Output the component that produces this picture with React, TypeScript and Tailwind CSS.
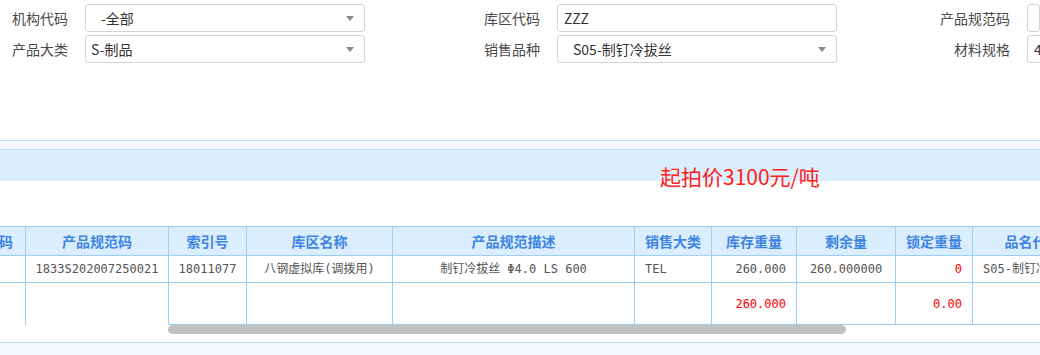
const cjk = "font-['Noto_Sans_CJK_SC',sans-serif]";
const mono = "font-['DejaVu_Sans_Mono','Noto_Sans_CJK_SC',monospace]";

type Field = { label: string; value: string; select?: boolean; pad: string };

const row1: Field[] = [
  { label: "机构代码", value: "-全部", select: true, pad: "pl-[15px]" },
  { label: "库区代码", value: "ZZZ", pad: "pl-[6px]" },
  { label: "产品规范码", value: "", pad: "pl-[6px]" },
];
const row2: Field[] = [
  { label: "产品大类", value: "S-制品", select: true, pad: "pl-[5px]" },
  { label: "销售品种", value: "S05-制钉冷拔丝", select: true, pad: "pl-[15px]" },
  { label: "材料规格", value: "4.0", pad: "pl-[6px]" },
];

const FormRow = ({ fields }: { fields: Field[] }) => (
  <div className="grid h-[28px] grid-cols-[85px_280px_192px_280px_190px_1fr] items-stretch">
    {fields.map((f, i) => (
      <div key={i} className="contents">
        <div className={`flex items-center justify-end pr-[17px] text-[14px] text-[#4a4a4a] whitespace-nowrap ${cjk}`}>
          {f.label}
        </div>
        <div className={`flex items-center rounded-[3px] border border-[#d4d4d4] bg-white ${f.pad} text-[14px] text-[#333] ${cjk}`}>
          <span className="flex-1 whitespace-nowrap overflow-hidden">{f.value}</span>
          {f.select && (
            <span className="mr-[10px] h-0 w-0 border-x-[4px] border-t-[5px] border-x-transparent border-t-[#8a8a8a]" />
          )}
        </div>
      </div>
    ))}
  </div>
);

const cols = [
  { w: "w-[81px]", title: "物料编码", align: "justify-center" },
  { w: "w-[143px]", title: "产品规范码", align: "justify-center" },
  { w: "w-[78px]", title: "索引号", align: "justify-center" },
  { w: "w-[146px]", title: "库区名称", align: "justify-center" },
  { w: "w-[242px]", title: "产品规范描述", align: "justify-center" },
  { w: "w-[77px]", title: "销售大类", align: "justify-start pl-[10px]" },
  { w: "w-[85px]", title: "库存重量", align: "justify-end pr-[10px]" },
  { w: "w-[99px]", title: "剩余量", align: "justify-center" },
  { w: "w-[77px]", title: "锁定重量", align: "justify-end pr-[10px]" },
  { w: "w-[120px]", title: "品名代码", align: "justify-start pl-[10px]" },
];

const data1 = ["", "1833S202007250021", "18011077", "八钢虚拟库(调拨用)", "制钉冷拔丝 Φ4.0 LS 600", "TEL", "260.000", "260.000000", "0", "S05-制钉冷拔丝"];
const red1 = [8];
const data2 = ["", "", "", "", "", "", "260.000", "", "0.00", ""];

export default function App() {
  return (
    <div className="h-[355px] w-[1040px] overflow-hidden bg-white">
      {/* query form */}
      <div className="flex flex-col gap-[3px] pt-[4px]">
        <FormRow fields={row1} />
        <FormRow fields={row2} />
      </div>

      {/* price banner */}
      <div className="mt-[77px] border-t border-[#bddcf5]">
        <div className="h-[9px] border-b border-[#bddcf5] bg-[#f5f9fe]" />
        <div className="h-[31px] bg-[#dbeefd]">
          <div className={`pl-[660px] pt-[15px] text-[21px] leading-[22px] text-[#ff2020] ${cjk}`}>起拍价3100元/吨</div>
        </div>
      </div>

      {/* grid */}
      <div className="mt-[45px] w-full overflow-hidden">
        <div className="ml-[-55px] flex w-max flex-col">
          <div className="flex h-[30px] border-y border-[#9dcff5] bg-[#dbeefd]">
            {cols.map((c, i) => (
              <div
                key={i}
                className={`${c.w} flex shrink-0 items-center justify-center border-r border-[#9dcff5] text-[14px] font-bold text-[#3d84e4] whitespace-nowrap ${cjk}`}
              >
                {c.title}
              </div>
            ))}
          </div>
          <div className="flex h-[27px]">
            {cols.map((c, i) => (
              <div
                key={i}
                className={`${c.w} flex shrink-0 items-center ${c.align} border-r border-b border-[#9dcff5] text-[12px] whitespace-nowrap ${mono} ${red1.includes(i) ? "text-[#ff0000]" : "text-[#555]"}`}
              >
                {data1[i]}
              </div>
            ))}
          </div>
          <div className="flex h-[42px]">
            {cols.map((c, i) => (
              <div
                key={i}
                className={`${c.w} flex shrink-0 items-center ${c.align} border-r border-[#9dcff5] ${i > 1 ? "border-b" : ""} text-[12px] text-[#ff0000] whitespace-nowrap ${mono}`}
              >
                {data2[i]}
              </div>
            ))}
          </div>
        </div>
        {/* horizontal scrollbar */}
        <div className="h-[9px]">
          <div className="ml-[168px] h-[9px] w-[678px] rounded-full bg-[#c1c1c1]" />
        </div>
      </div>

      <div className="mt-[8px] h-[20px] border-t border-[#bddcf5] bg-[#f5f9fe]" />
    </div>
  );
}
